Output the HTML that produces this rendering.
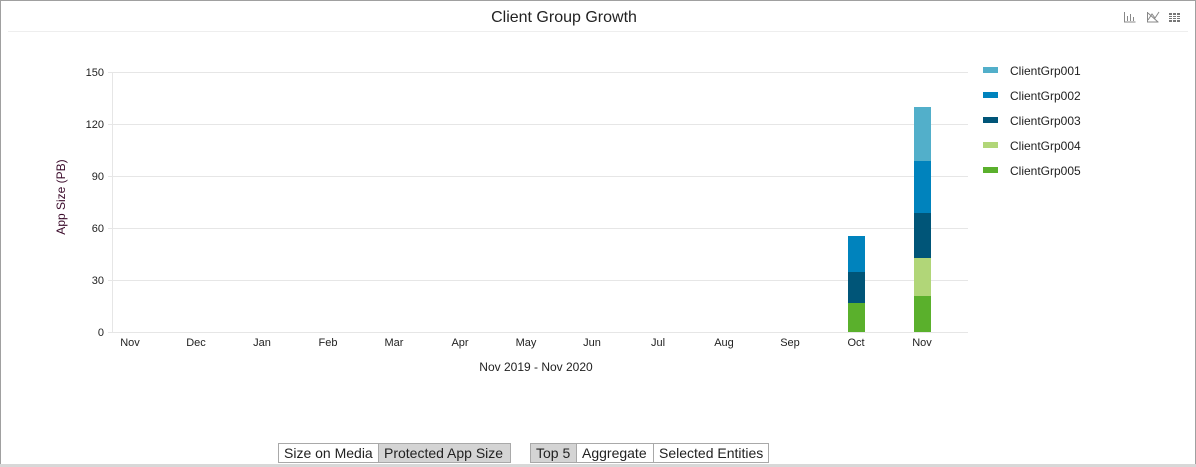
<!DOCTYPE html>
<html><head><style>
html,body{margin:0;width:1196px;height:467px;overflow:hidden;background:#fff;font-family:"Liberation Sans",sans-serif;}
.frame{position:absolute;left:0;top:0;width:1194px;height:465px;border:1px solid #a0a0a0;border-bottom:none}
.btn{position:absolute;top:443px;height:20px;border:1px solid #a9a9a9;font-size:14px;line-height:19px;padding:0 5px;box-sizing:border-box;color:#222;background:#fff;white-space:nowrap;overflow:hidden}
.sel{background:#d4d4d4}
</style></head><body>
<div class="frame"></div>
<div style="position:absolute;left:0;top:464px;width:1196px;height:3px;background:#d8d8d8"></div>
<svg width="1196" height="467" style="position:absolute;left:0;top:0" font-family="Liberation Sans, sans-serif">
<text x="564" y="22" font-size="16" text-anchor="middle" fill="#222">Client Group Growth</text>
<line x1="8" y1="31.5" x2="1188" y2="31.5" stroke="#eee"/>
<g stroke="#888" stroke-width="1" fill="none">
<path d="M1124.5 12v10h11"/><path d="M1127.5 16v5M1130.5 14v7M1133.5 17v4"/>
<path d="M1147.5 12v10h11"/><path d="M1148 20l4-6 3 4 4-6M1148 13l10 9"/>
</g>
<g fill="#777"><rect x="1169" y="13" width="11" height="9"/></g>
<g stroke="#fff" stroke-width="1"><path d="M1169 15.5h11M1169 17.5h11M1169 19.5h11M1172.5 13v9M1176.5 13v9"/></g>
<g stroke="#e6e6e6">
<line x1="112" y1="72.5" x2="968" y2="72.5"/><line x1="112" y1="124.5" x2="968" y2="124.5"/>
<line x1="112" y1="176.5" x2="968" y2="176.5"/><line x1="112" y1="228.5" x2="968" y2="228.5"/>
<line x1="112" y1="280.5" x2="968" y2="280.5"/><line x1="112" y1="332.5" x2="968" y2="332.5"/>
<line x1="112.5" y1="72" x2="112.5" y2="332"/>
<path d="M108 72.5h4M108 124.5h4M108 176.5h4M108 228.5h4M108 280.5h4M108 332.5h4"/>
</g>
<g font-size="11" fill="#222" text-anchor="end">
<text x="104" y="76">150</text><text x="104" y="128">120</text><text x="104" y="180">90</text>
<text x="104" y="232">60</text><text x="104" y="284">30</text><text x="104" y="336">0</text>
</g>
<text transform="translate(65,197) rotate(-90)" font-size="12" fill="#3a0a2a" text-anchor="middle">App Size (PB)</text>
<g font-size="11" fill="#222" text-anchor="middle">
<text x="130" y="346">Nov</text><text x="196" y="346">Dec</text><text x="262" y="346">Jan</text>
<text x="328" y="346">Feb</text><text x="394" y="346">Mar</text><text x="460" y="346">Apr</text>
<text x="526" y="346">May</text><text x="592" y="346">Jun</text><text x="658" y="346">Jul</text>
<text x="724" y="346">Aug</text><text x="790" y="346">Sep</text><text x="856" y="346">Oct</text>
<text x="922" y="346">Nov</text>
</g>
<text x="536" y="371" font-size="12" fill="#222" text-anchor="middle">Nov 2019 - Nov 2020</text>
<rect x="848" y="236" width="17" height="36" fill="#0083bd"/>
<rect x="848" y="272" width="17" height="31" fill="#005578"/>
<rect x="848" y="303" width="17" height="29" fill="#5ab02c"/>
<rect x="914" y="107" width="17" height="54" fill="#52afca"/>
<rect x="914" y="161" width="17" height="52" fill="#0083bd"/>
<rect x="914" y="213" width="17" height="45" fill="#005578"/>
<rect x="914" y="258" width="17" height="38" fill="#b1d678"/>
<rect x="914" y="296" width="17" height="36" fill="#5ab02c"/>
<rect x="983" y="67" width="15" height="6" fill="#52afca"/>
<rect x="983" y="92" width="15" height="6" fill="#0083bd"/>
<rect x="983" y="117" width="15" height="6" fill="#005578"/>
<rect x="983" y="142" width="15" height="6" fill="#b1d678"/>
<rect x="983" y="167" width="15" height="6" fill="#5ab02c"/>
<g font-size="12" fill="#222">
<text x="1010" y="75">ClientGrp001</text><text x="1010" y="100">ClientGrp002</text>
<text x="1010" y="125">ClientGrp003</text><text x="1010" y="150">ClientGrp004</text>
<text x="1010" y="175">ClientGrp005</text>
</g>
</svg>
<div class="btn" style="left:278px;width:101px">Size on Media</div>
<div class="btn sel" style="left:378px;width:133px">Protected App Size</div>
<div class="btn sel" style="left:530px;width:47px">Top 5</div>
<div class="btn" style="left:576px;width:78px">Aggregate</div>
<div class="btn" style="left:653px;width:116px">Selected Entities</div>
</body></html>
